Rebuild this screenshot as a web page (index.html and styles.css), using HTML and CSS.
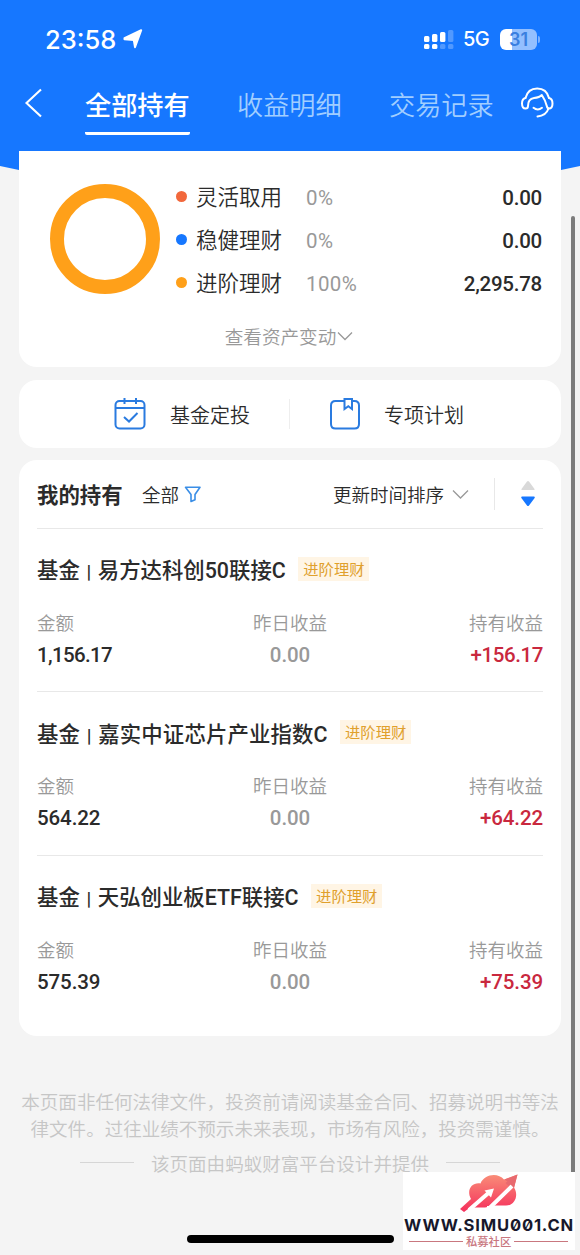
FILE: index.html
```html
<!DOCTYPE html>
<html lang="zh-CN">
<head>
<meta charset="utf-8">
<title>全部持有</title>
<link rel="stylesheet" href="styles.css">
</head>
<body>
<div class="screen">
  <header class="header">
    <div class="status">
      <span class="clock">23:58</span>
      <svg class="locate" width="20" height="20" viewBox="0 0 20 20"><path d="M1.500 9.200 18.200 1.200 12 18.200 10.800 11 1.500 10.200z" fill="#fff" stroke="#fff" stroke-width="2" stroke-linejoin="round"/></svg>
      <svg class="signal" width="30" height="20" viewBox="0 0 30 20">
        <g fill="#fff"><rect x="0" y="7" width="5.400" height="6" rx="1.500"/><rect x="8" y="5" width="5.400" height="8" rx="1.500"/><rect x="16" y="3" width="5.400" height="10" rx="1.500"/><rect x="0" y="15" width="5.400" height="5" rx="1.500"/><rect x="8" y="15" width="5.400" height="5" rx="1.500"/></g>
        <g fill="#fff" opacity=".25"><rect x="24" y="1" width="5.400" height="12" rx="1.500"/><rect x="16" y="15" width="5.400" height="5" rx="1.500"/><rect x="24" y="15" width="5.400" height="5" rx="1.500"/></g>
      </svg>
      <span class="net">5G</span>
      <span class="battery">31</span><span class="cap"></span>
    </div>
    <nav class="tabs">
      <svg class="back" width="20" height="32" viewBox="0 0 20 32"><path d="M18 2.500 3.500 16 18 29.500" fill="none" stroke="#fff" stroke-width="2.100"/></svg>
      <span class="tab active">全部持有</span>
      <span class="tab">收益明细</span>
      <span class="tab">交易记录</span>
      <svg class="service" width="34" height="32" viewBox="0 0 34 32" fill="none" stroke="#fff" stroke-width="2" stroke-linecap="round" stroke-linejoin="round"><path d="M5.500 11C7 5 11.500 1.500 17.200 1.500S27.500 5 29 11"/><path d="M5.500 11C3 11.500 2 13.800 2 16.500s1.200 5 3.500 5c1.700 0 2.500-1 2.500-2.500 0-5 2-7.500 6-8 4-.3 6-1 7.800-3 2 3 4 6 5 11 .3 1.600 1 2.500 2.200 2.500 2.200 0 3.500-2.300 3.500-5s-1.200-5-3.500-5.500"/><path d="M13.500 20.800c2.500 2 6 2 8.500 0M28.500 21.500c-1.500 4.500-5 7.500-11 8"/></svg>
    </nav>
  </header>

  <main>
    <section class="card assets">
      <div class="summary">
        <div class="ring"></div>
        <div class="legend">
          <div class="item"><i class="dot red"></i><span class="kind">灵活取用</span><span class="pct">0%</span><b class="num">0.00</b></div>
          <div class="item"><i class="dot blue"></i><span class="kind">稳健理财</span><span class="pct">0%</span><b class="num">0.00</b></div>
          <div class="item"><i class="dot orange"></i><span class="kind">进阶理财</span><span class="pct">100%</span><b class="num">2,295.78</b></div>
        </div>
      </div>
      <div class="more"><span>查看资产变动</span><svg width="17" height="12" viewBox="0 0 17 12"><path d="M2 2.500 9 9.500l7-7" fill="none" stroke="#999" stroke-width="1.300"/></svg></div>
    </section>

    <section class="card plans">
      <div class="plan first">
        <svg width="34" height="34" viewBox="0 0 34 34" fill="none" stroke="#2a7be0" stroke-width="2"><rect x="2.500" y="4" width="29" height="27.500" rx="4"/><path d="M2.500 11h29M11.500 1v6M23 1v6"/><path d="m11 20 5 4.500 8.500-8.500"/></svg>
        <span>基金定投</span>
      </div>
      <div class="plan">
        <svg width="34" height="34" viewBox="0 0 34 34" fill="none" stroke="#2a7be0" stroke-width="2"><path d="M16 4H7.500Q3 4 3 8.500v18.500Q3 31.500 7.500 31.500h19q4.500 0 4.500-4.500V8.500Q31 4 26.500 4H24"/><path d="M16.500 2H24v10l-3.700-2.800-3.800 2.800z"/></svg>
        <span>专项计划</span>
      </div>
    </section>

    <section class="card holdings">
      <div class="bar">
        <h2>我的持有</h2>
        <span class="all">全部</span>
        <svg class="funnel" width="18" height="18" viewBox="0 0 18 18"><path d="M1.500 2.300h14.500l-5 7.200v5.200L7 16.500v-7z" fill="none" stroke="#3a8ee6" stroke-width="1.600" stroke-linejoin="round"/></svg>
        <span class="sort">更新时间排序</span>
        <svg class="down" width="17" height="12" viewBox="0 0 17 12"><path d="M1 2.500l7.500 7.500L16 2.500" fill="none" stroke="#999" stroke-width="1.300"/></svg>
        <i class="split"></i>
        <svg class="order" width="16" height="28" viewBox="0 0 16 28"><path d="M7 1.500q1-1 2 0L14.500 9q.5 1-.5 1H2q-1 0-.5-1z" fill="#d9d9d9"/><path d="M7 25.500q1 1 2 0L14.600 18q.7-1.500-.6-1.500H2q-1.300 0-.6 1.500z" fill="#1677ff"/></svg>
      </div>

      <article class="fund">
        <div class="name"><h3>基金 <em>|</em> 易方达科创50联接C</h3><span class="tag">进阶理财</span></div>
        <div class="cells">
          <div><label>金额</label><b class="tight">1,156.17</b></div>
          <div class="mid"><label>昨日收益</label><b>0.00</b></div>
          <div class="end"><label>持有收益</label><b class="snug">+156.17</b></div>
        </div>
      </article>
      <article class="fund">
        <div class="name"><h3 class="wide">基金 <em>|</em> 嘉实中证芯片产业指数C</h3><span class="tag">进阶理财</span></div>
        <div class="cells">
          <div><label>金额</label><b>564.22</b></div>
          <div class="mid"><label>昨日收益</label><b>0.00</b></div>
          <div class="end"><label>持有收益</label><b>+64.22</b></div>
        </div>
      </article>
      <article class="fund">
        <div class="name"><h3>基金 <em>|</em> 天弘创业板ETF联接C</h3><span class="tag">进阶理财</span></div>
        <div class="cells">
          <div><label>金额</label><b>575.39</b></div>
          <div class="mid"><label>昨日收益</label><b>0.00</b></div>
          <div class="end"><label>持有收益</label><b>+75.39</b></div>
        </div>
      </article>
    </section>
  </main>

  <footer class="foot">
    <p>本页面非任何法律文件，投资前请阅读基金合同、招募说明书等法<br>律文件。过往业绩不预示未来表现，市场有风险，投资需谨慎。</p>
    <div class="by"><i></i><span>该页面由蚂蚁财富平台设计并提供</span><i></i></div>
  </footer>

  <div class="scroll"></div>
  <div class="home"></div>
  <div class="mark">
    <svg width="172" height="78" viewBox="0 0 172 78">
      <defs><linearGradient id="g" x1="0" y1="0" x2="0" y2="1"><stop offset="0" stop-color="#f98d78"/><stop offset="1" stop-color="#f5305c"/></linearGradient></defs>
      <path d="M57 37 68 27C63 18 69 10 77.500 11.500 81 2 95 0 101 7.500L114.500 2.500 111 15.500C116 23 112 33.500 103 33.500H92L82 35.500H67L61 40z" fill="url(#g)"/>
      <path d="M66 38 86 20.500M84.500 38 109.500 13.500" stroke="#fff" stroke-width="4"/>
      <path d="m91 16.500-9.500 2L88 25.500zM84 34h10v4H84z" fill="#fff"/>
      <path d="M101.500 7.500 114.500 2.500 111 16l-3.500-3.500-2 1.500-3-3 2-1.500z" fill="#e86a6f"/>
      <text x="1" y="59" class="url" textLength="170" lengthAdjust="spacingAndGlyphs">WWW.SIMU001.CN</text>
      <path d="M6 69.500h54M111 69.500h54" stroke="#c9777f" stroke-width="1.200"/>
      <text x="63" y="74" class="club">私募社区</text>
    </svg>
  </div>
</div>
</body>
</html>
```

FILE: styles.css
```css
* { box-sizing: border-box; }
body { margin: 0; font-family: "Noto Sans CJK SC", sans-serif; color: #2b2b2b; }
h2, h3, p { margin: 0; }
svg { display: block; flex: none; }

.screen { position: relative; width: 580px; height: 1255px; overflow: hidden; background: #f4f4f4; }
.header { height: 171px; background: #1677ff; clip-path: polygon(0 0, 100% 0, 100% 166px, 561px 170px, 19px 170px, 0 166px); }

.status { display: flex; align-items: center; height: 78px; padding: 0 40px 0 45px; color: #fff; font-family: Inter, sans-serif; }
.clock { width: 71px; font-size: 25.500px; font-weight: 500; white-space: nowrap; }
.locate { margin-left: 7px; }
.signal { margin-left: 281px; }
.net { width: 28px; margin-left: 9px; font-size: 20px; font-weight: 500; letter-spacing: -.5px; }
.battery { width: 37px; height: 21px; margin-left: 9px; border-radius: 6px; background: linear-gradient(90deg, #fff 12px, #93bfff 12px); color: #3a7fe0; font-size: 18px; font-weight: 600; line-height: 21px; text-align: center; }
.cap { width: 2px; height: 7px; margin-left: 1px; border-radius: 0 2px 2px 0; background: #7db1ff; }

.tabs { display: flex; height: 57px; padding-left: 23px; color: #a1ceff; font-size: 26.200px; }
.back { margin-top: 9px; }
.tab { width: 105px; margin-left: 47px; line-height: 52px; font-weight: 350; white-space: nowrap; }
.tab.active { margin-left: 42px; border-bottom: 3px solid #fff; border-radius: 2px; color: #fff; font-weight: 500; }
.service { margin: 9px 0 0 26px; }

main { display: flex; flex-direction: column; gap: 12.500px; margin: -20px 19px 0; }
.card { position: relative; border-radius: 18px; background: #fff; }
.assets { height: 216px; border-radius: 0 0 18px 18px; }
.summary { display: flex; padding: 25px 19px 0 31px; }
.ring { width: 110px; height: 110px; margin-top: 8px; border: 14px solid #ffa019; border-radius: 50%; }
.legend { flex: 1; margin-left: 16px; }
.item { display: flex; align-items: center; height: 43px; font-size: 21.500px; font-weight: 350; }
.dot { width: 11px; height: 11px; margin-top: -2px; border-radius: 50%; }
.red { background: #f2683c; }
.blue { background: #1677ff; }
.orange { background: #ffa019; }
.kind { width: 86px; margin: -4px 24px 0 9px; white-space: nowrap; }
.pct { color: #999; font: 400 20.500px Roboto, sans-serif; letter-spacing: .4px; }
.num { margin-left: auto; font: 500 20.500px Roboto, sans-serif; letter-spacing: -.25px; }
.more { display: flex; align-items: center; justify-content: center; margin: 17px 2px 0 0; color: #999; font-size: 18.600px; font-weight: 350; line-height: 28px; }

.plans { display: flex; height: 68px; }
.plan { display: flex; align-items: center; flex: none; width: 271px; padding-left: 38px; font-size: 20px; font-weight: 350; }
.plan.first { padding-left: 94px; }
.plan.first::after { content: ""; width: 1px; height: 30px; margin-left: auto; background: #eee; }
.plan span { margin: 1px 0 0 22px; white-space: nowrap; }
.plan.first span { margin-left: 23px; }

.holdings { height: 576px; padding: 0 18px; }
.bar { display: flex; align-items: center; height: 68.500px; padding-top: 1px; border-bottom: 1px solid #e8e8e8; font-size: 18.500px; font-weight: 350; white-space: nowrap; }
.bar h2 { width: 86px; margin-top: -2px; font-size: 21.400px; font-weight: 700; }
.all { width: 37px; margin: -1px 0 0 19px; }
.funnel { margin-left: 5px; }
.sort { margin: -1px 0 0 auto; }
.down { margin-left: 8px; }
.split { width: 1px; height: 32px; margin-left: 25px; background: #e8e8e8; }
.order { margin: 0 7px 0 25px; }

.fund { height: 163.500px; padding-top: 21px; border-bottom: 1px solid #e8e8e8; }
.fund:last-child { border-bottom: 0; }
.name { display: flex; align-items: center; height: 38px; white-space: nowrap; }
.name h3 { font-family: Roboto, "Noto Sans CJK SC", sans-serif; font-size: 21.400px; font-weight: 500; }
.name .wide { letter-spacing: .12px; }
.name em { margin: 0 1.300px; font-style: normal; font-size: 19px; }
.tag { height: 24px; margin-left: 12.500px; padding: 0 5px; background: #fff5e5; color: #e0a02c; font-size: 15.300px; font-weight: 400; line-height: 23px; }
.cells { display: grid; grid-template-columns: 1fr 1fr 1fr; padding-top: 20px; }
.cells label { display: block; color: #999; font-size: 18.500px; font-weight: 350; line-height: 28px; }
.cells b { display: block; font: 500 20.500px/39px Roboto, sans-serif; letter-spacing: -.1px; }
.cells .tight { letter-spacing: -.65px; }
.cells .snug { letter-spacing: -.4px; }
.mid { text-align: center; }
.mid b { color: #999; }
.end { text-align: right; }
.end b { color: #c9283e; }

.foot { padding-top: 51px; color: #c6c6c6; font-size: 18.550px; font-weight: 350; line-height: 27px; text-align: center; white-space: nowrap; }
.by { display: flex; align-items: center; justify-content: center; gap: 17px; margin-top: 8px; }
.by i { width: 54px; height: 1px; background: #d6d6d6; }

.scroll { position: absolute; left: 571px; top: 216px; width: 4px; height: 971px; border-radius: 2px; background: #7c7c7c; }
.home { position: absolute; left: 187px; top: 1235px; width: 207px; height: 8px; border-radius: 4px; background: #000; }
.mark { position: absolute; left: 403px; top: 1172px; width: 172px; height: 78px; background: #fff; }
.url { fill: #17182c; font: 650 16.500px Inter, sans-serif; letter-spacing: .8px; font-feature-settings: "zero"; }
.club { fill: #c9777f; font-size: 11.300px; font-weight: 500; }
```
